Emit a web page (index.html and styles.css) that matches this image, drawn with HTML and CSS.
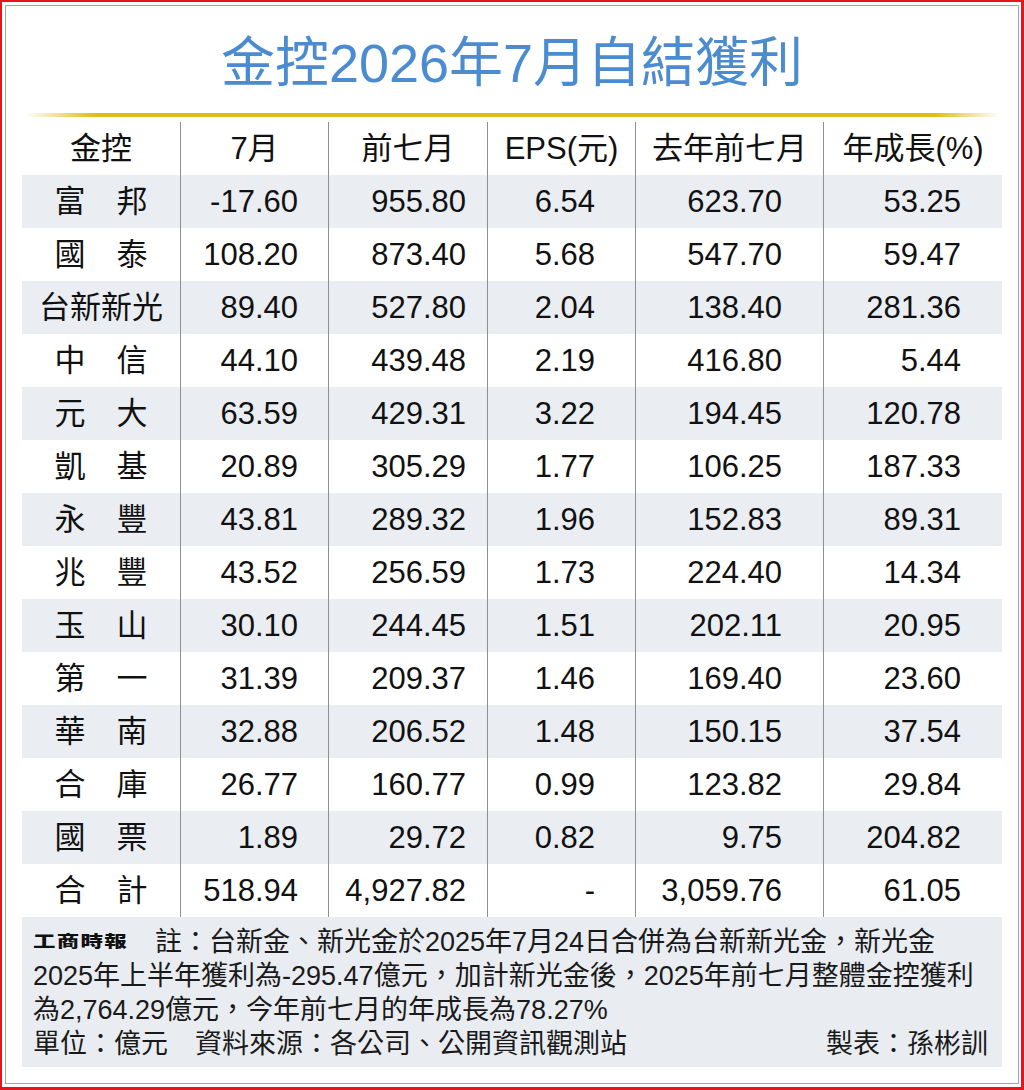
FILE: index.html
```html
<!DOCTYPE html>
<html lang="zh-Hant">
<head>
<meta charset="utf-8">
<title>金控2026年7月自結獲利</title>
<link rel="stylesheet" href="styles.css">
</head>
<body>
<div class="frame">
  <div class="card">
    <h1 class="title">金控2026年7月自結獲利</h1>
    <div class="rule"></div>
    <div class="table">
      <div class="row head">
        <div class="c">金控</div><div class="c">7月</div><div class="c">前七月</div><div class="c">EPS(元)</div><div class="c">去年前七月</div><div class="c">年成長(%)</div>
      </div>
      <div class="row alt">
        <div class="c"><span class="n2">富邦</span></div><div class="c">-17.60</div><div class="c">955.80</div><div class="c">6.54</div><div class="c">623.70</div><div class="c">53.25</div>
      </div>
      <div class="row">
        <div class="c"><span class="n2">國泰</span></div><div class="c">108.20</div><div class="c">873.40</div><div class="c">5.68</div><div class="c">547.70</div><div class="c">59.47</div>
      </div>
      <div class="row alt">
        <div class="c">台新新光</div><div class="c">89.40</div><div class="c">527.80</div><div class="c">2.04</div><div class="c">138.40</div><div class="c">281.36</div>
      </div>
      <div class="row">
        <div class="c"><span class="n2">中信</span></div><div class="c">44.10</div><div class="c">439.48</div><div class="c">2.19</div><div class="c">416.80</div><div class="c">5.44</div>
      </div>
      <div class="row alt">
        <div class="c"><span class="n2">元大</span></div><div class="c">63.59</div><div class="c">429.31</div><div class="c">3.22</div><div class="c">194.45</div><div class="c">120.78</div>
      </div>
      <div class="row">
        <div class="c"><span class="n2">凱基</span></div><div class="c">20.89</div><div class="c">305.29</div><div class="c">1.77</div><div class="c">106.25</div><div class="c">187.33</div>
      </div>
      <div class="row alt">
        <div class="c"><span class="n2">永豐</span></div><div class="c">43.81</div><div class="c">289.32</div><div class="c">1.96</div><div class="c">152.83</div><div class="c">89.31</div>
      </div>
      <div class="row">
        <div class="c"><span class="n2">兆豐</span></div><div class="c">43.52</div><div class="c">256.59</div><div class="c">1.73</div><div class="c">224.40</div><div class="c">14.34</div>
      </div>
      <div class="row alt">
        <div class="c"><span class="n2">玉山</span></div><div class="c">30.10</div><div class="c">244.45</div><div class="c">1.51</div><div class="c">202.11</div><div class="c">20.95</div>
      </div>
      <div class="row">
        <div class="c"><span class="n2">第一</span></div><div class="c">31.39</div><div class="c">209.37</div><div class="c">1.46</div><div class="c">169.40</div><div class="c">23.60</div>
      </div>
      <div class="row alt">
        <div class="c"><span class="n2">華南</span></div><div class="c">32.88</div><div class="c">206.52</div><div class="c">1.48</div><div class="c">150.15</div><div class="c">37.54</div>
      </div>
      <div class="row">
        <div class="c"><span class="n2">合庫</span></div><div class="c">26.77</div><div class="c">160.77</div><div class="c">0.99</div><div class="c">123.82</div><div class="c">29.84</div>
      </div>
      <div class="row alt">
        <div class="c"><span class="n2">國票</span></div><div class="c">1.89</div><div class="c">29.72</div><div class="c">0.82</div><div class="c">9.75</div><div class="c">204.82</div>
      </div>
      <div class="row">
        <div class="c"><span class="n2">合計</span></div><div class="c">518.94</div><div class="c">4,927.82</div><div class="c">-</div><div class="c">3,059.76</div><div class="c">61.05</div>
      </div>
    </div>
    <div class="note">
      <p class="text"><span class="logo">工商時報</span>註：台新金、新光金於2025年7月24日合併為台新新光金，新光金<br>2025年上半年獲利為-295.47億元，加計新光金後，2025年前七月整體金控獲利<br>為2,764.29億元，今年前七月的年成長為78.27%</p>
      <div class="src"><span>單位：億元　資料來源：各公司、公開資訊觀測站</span><span>製表：孫彬訓</span></div>
    </div>
  </div>
</div>
</body>
</html>
```
FILE: styles.css
```css
html, body {
  margin: 0;
  padding: 0;
  background: #ffffff;
}

.frame {
  width: 1024px;
  height: 1090px;
  box-sizing: border-box;
  border-style: solid;
  border-color: #e8141c;
  border-width: 2px 3px 3px 2px;
  padding: 3px 2px 3px 3px;
}

.card {
  height: 100%;
  box-sizing: border-box;
  border: 1px solid #9aa6b6;
  background: #ffffff;
  padding: 25px 16px 0 16px;
  font-family: "Liberation Sans", "Noto Sans CJK TC", sans-serif;
  color: #111111;
}

.title {
  margin: 0;
  height: 64px;
  line-height: 64px;
  text-align: center;
  font-size: 54px;
  font-weight: 400;
  color: #4b8bd0;
  letter-spacing: 0;
}

.rule {
  margin: 18px 2px 0 3px;
  height: 4px;
  background: linear-gradient(to right,
    rgba(228, 190, 30, 0) 0%,
    #e3bc1c 7%,
    #e3bc1c 93.5%,
    rgba(228, 190, 30, 0) 100%);
}

.table {
  margin-top: 5px;
}

.row {
  display: grid;
  grid-template-columns: 158px 148px 159px 148px 188px 179px;
  height: 53px;
}

.row.alt {
  background: #eaedf1;
}

.c {
  display: flex;
  align-items: center;
  justify-content: flex-end;
  box-sizing: border-box;
  font-size: 31px;
  line-height: 1;
  white-space: nowrap;
}

.c + .c {
  border-left: 1px solid #8f8f8f;
}

.row .c:nth-child(1) { justify-content: center; }
.row .c:nth-child(2) { padding-right: 30px; }
.row .c:nth-child(3) { padding-right: 21px; }
.row .c:nth-child(4) { padding-right: 40px; }
.row .c:nth-child(5) { padding-right: 41px; }
.row .c:nth-child(6) { padding-right: 41px; }

.row.head .c {
  justify-content: center;
  padding: 0;
}

.n2 {
  display: inline-block;
  width: 93px;
  text-align: justify;
  text-align-last: justify;
}

.note {
  background: #e9edf1;
  padding: 8px 14px 6px 11px;
  font-size: 27px;
  line-height: 34px;
  color: #1a1a1a;
}

.text {
  margin: 0;
}

.logo {
  display: inline-block;
  font-size: 18px;
  font-weight: 900;
  line-height: 1;
  letter-spacing: 1px;
  margin-right: 46px;
  vertical-align: 3px;
  transform: scale(1.25, 0.9);
  transform-origin: left center;
  color: #111111;
}

.src {
  display: flex;
  justify-content: space-between;
}
```
